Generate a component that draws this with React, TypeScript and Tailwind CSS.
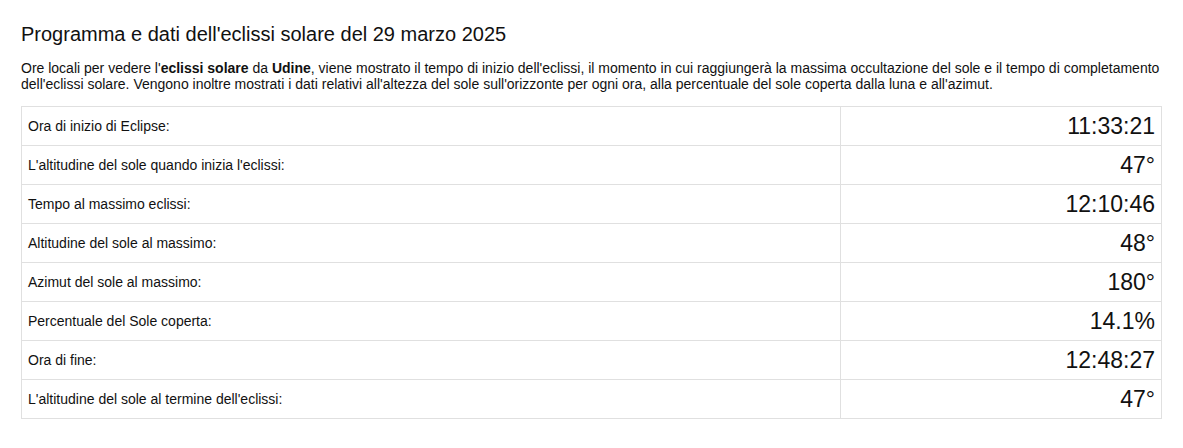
const rows = [
  ["Ora di inizio di Eclipse:", "11:33:21"],
  ["L'altitudine del sole quando inizia l'eclissi:", "47°"],
  ["Tempo al massimo eclissi:", "12:10:46"],
  ["Altitudine del sole al massimo:", "48°"],
  ["Azimut del sole al massimo:", "180°"],
  ["Percentuale del Sole coperta:", "14.1%"],
  ["Ora di fine:", "12:48:27"],
  ["L'altitudine del sole al termine dell'eclissi:", "47°"],
];

export default function App() {
  return (
    <div className="min-h-screen bg-white px-[21px] pt-[22px] font-['Liberation_Sans',Arial,sans-serif] text-[#111]">
      <h1 className="text-[20px] leading-[24px]">Programma e dati dell'eclissi solare del 29 marzo 2025</h1>
      <p className="mt-[14px] w-[1141px] text-[14px] leading-[16px]">
        Ore locali per vedere l'<b>eclissi solare</b> da <b>Udine</b>, viene mostrato il tempo di inizio dell'eclissi, il momento in cui raggiungerà la massima occultazione del sole e il tempo di completamento dell'eclissi solare. Vengono inoltre mostrati i dati relativi all'altezza del sole sull'orizzonte per ogni ora, alla percentuale del sole coperta dalla luna e all'azimut.
      </p>
      <table className="mt-[14px] w-[1141px] border-collapse border border-[#e0e0e0]">
        <tbody>
          {rows.map(([label, value]) => (
            <tr key={label} className="h-[39px] border-b border-[#e0e0e0]">
              <td className="w-[819px] border-r border-[#e0e0e0] px-[6px] text-[14px]">{label}</td>
              <td className="px-[6px] text-right text-[23px]">{value}</td>
            </tr>
          ))}
        </tbody>
      </table>
    </div>
  );
}
